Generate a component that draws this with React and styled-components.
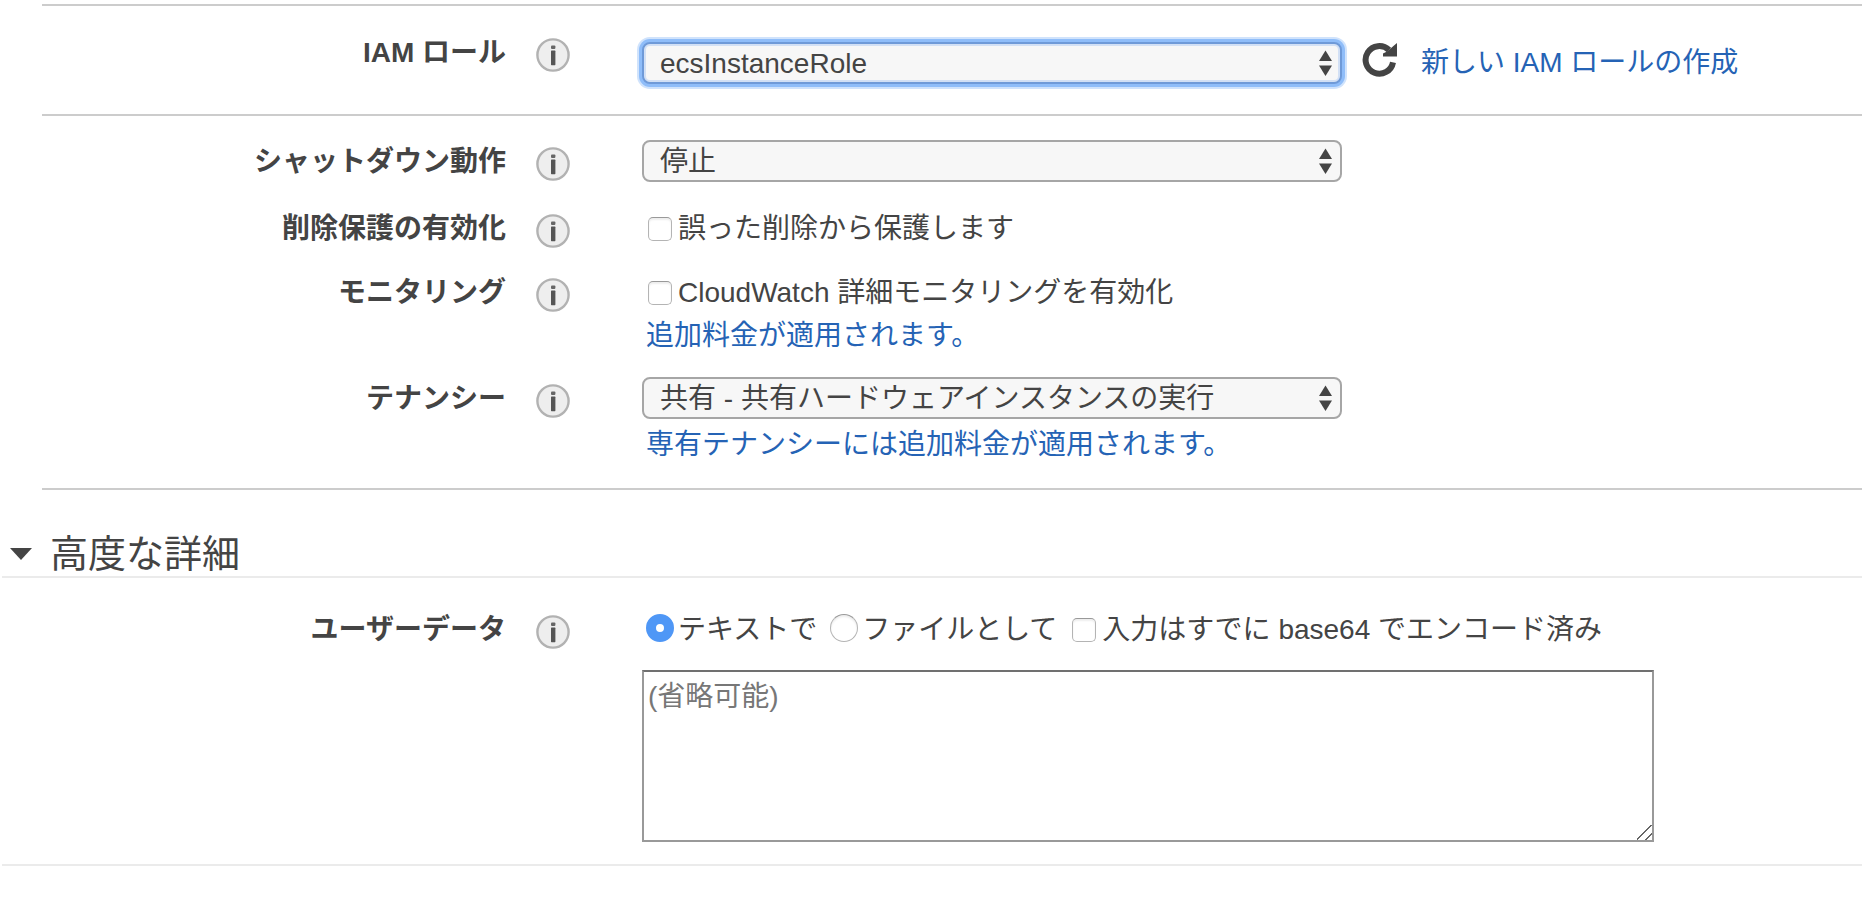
import React, { useState } from 'react'
import styled, { createGlobalStyle } from 'styled-components'

const GlobalStyle = createGlobalStyle`
  * {
    box-sizing: border-box;
  }

  body {
    margin: 0;
    background: #fff;
    color: #444;
    font-family: 'Liberation Sans', 'Noto Sans CJK JP', sans-serif;
    font-size: 28px;
    line-height: 44px;
  }

  input, select, textarea, button {
    margin: 0;
    font: inherit;
    color: inherit;
  }
`

const Page = styled.main`
  padding-top: 4px;
  overflow-x: hidden;
`

const Rule = styled.hr`
  height: 2px;
  margin: 0 0 0 ${props => (props.$faint ? '2px' : '42px')};
  border: 0;
  background: ${props => (props.$faint ? '#ebebeb' : '#ccc')};
`

const Section = styled.section`
  display: flex;
  flex-direction: column;
  gap: 20px;
  padding: ${props => props.$top}px 0 ${props => props.$bottom}px;
`

const Row = styled.div`
  display: flex;
  align-items: flex-start;
`

const RowLabel = styled.label`
  flex: 0 0 506px;
  font-weight: bold;
  text-align: right;
`

const InfoButton = styled.button`
  flex: none;
  width: 34px;
  height: 34px;
  margin: 7px 72px 0 30px;
  padding: 0;
  border: 0;
  background: none;
  cursor: pointer;

  svg {
    display: block;
  }
`

const Field = styled.div`
  flex: 1;
  min-width: 0;
`

const Controls = styled.div`
  display: flex;
  align-items: flex-start;
  padding-top: 11px;
`

const SelectBox = styled.div`
  position: relative;
  width: 700px;
  max-width: 100%;
  margin-bottom: 5px;

  svg {
    position: absolute;
    top: 8px;
    right: 10px;
    pointer-events: none;
  }
`

const StyledSelect = styled.select`
  display: block;
  width: 100%;
  height: 42px;
  padding: 2px 40px 0 16px;
  appearance: none;
  outline: none;
  border: 2px solid ${props => (props.$active ? '#6f9ad8' : '#a6a6a6')};
  border-radius: 8px;
  background: #f7f7f7;
  line-height: 36px;
  box-shadow: ${props =>
    props.$active
      ? 'inset 0 0 0 2px #d2e0f5, 0 0 0 3px #8fbdf9, 0 0 0 5px #d0e3fc'
      : 'none'};
`

const RefreshButton = styled.button`
  flex: none;
  width: 36px;
  height: 36px;
  margin: 0 24px 0 19px;
  padding: 0;
  border: 0;
  background: none;
  cursor: pointer;

  svg {
    display: block;
  }
`

const Link = styled.a`
  color: #2563b5;
  line-height: 42px;
  text-decoration: none;
`

const Note = styled.div`
  padding-left: 4px;
  line-height: 42px;
`

const Options = styled.div`
  display: flex;
  flex-wrap: wrap;
  gap: 13px;
  padding-left: 4px;
`

const Option = styled.label`
  display: flex;
  align-items: center;
`

const Checkbox = styled.input`
  width: 24px;
  height: 24px;
  margin: 0 6px 0 2px;
  appearance: none;
  border: 1px solid #b4b4b4;
  border-top-color: #999;
  border-radius: 5px;
  background: #fff;
  box-shadow: inset 0 2px 2px #eee;

  &:checked {
    border: 8px solid #4f97f6;
  }
`

const Radio = styled.input`
  width: 28px;
  height: 28px;
  margin: 0 4px 4px 0;
  appearance: none;
  border: 1px solid #b4b4b4;
  border-top-color: #999;
  border-radius: 50%;
  background: #fff;
  box-shadow: inset 0 2px 2px #eee;

  &:checked {
    border: 10px solid #4f97f6;
    box-shadow: none;
  }
`

const UserData = styled.textarea`
  display: block;
  width: 1012px;
  max-width: 100%;
  height: 172px;
  margin-top: 18px;
  padding: 4px;
  border: 2px solid #999;
  border-top-color: #707070;
  outline: none;
  background: #fff;
  line-height: 42px;

  &::placeholder {
    color: #777;
    opacity: 1;
  }

  &::-webkit-resizer {
    background: linear-gradient(
      135deg,
      transparent 44%,
      #666 46%,
      #666 50%,
      transparent 52%,
      transparent 74%,
      #666 76%,
      #666 80%,
      transparent 82%
    );
  }
`

const Heading = styled.h2`
  display: flex;
  margin: 42px 0 0;
  font-size: 38px;
  font-weight: normal;
  line-height: 44px;
`

const Toggle = styled.button`
  display: flex;
  align-items: center;
  gap: 18px;
  padding: 0 0 0 10px;
  border: 0;
  background: none;
  cursor: pointer;
`

const Info = ({ about }) => (
  <InfoButton type="button" aria-label={about}>
    <svg width="34" height="34" viewBox="0 0 34 34">
      <circle cx="17" cy="17" r="15.6" fill="#eee" stroke="#b2b2b2" strokeWidth="2.4" />
      <rect x="15" y="7.5" width="4.4" height="3.6" rx="1" fill="#666" />
      <rect x="15" y="12.6" width="4.4" height="14.6" rx="0.6" fill="#555" />
    </svg>
  </InfoButton>
)

const Select = ({ id, active, options }) => (
  <SelectBox>
    <StyledSelect id={id} $active={active}>
      {options.map(option => (
        <option key={option}>{option}</option>
      ))}
    </StyledSelect>
    <svg width="13" height="27" viewBox="0 0 13 27" fill="#444">
      <path d="M6.5 0.5 L13 11 H0 Z" />
      <path d="M0 15.5 H13 L6.5 26 Z" />
    </svg>
  </SelectBox>
)

const FormRow = ({ id, label, children }) => (
  <Row>
    <RowLabel htmlFor={id}>{label}</RowLabel>
    <Info about={label} />
    <Field>{children}</Field>
  </Row>
)

const App = () => {
  const [open, setOpen] = useState(true)

  return (
    <Page>
      <GlobalStyle />
      <Rule />
      <Section $top={25} $bottom={25}>
        <FormRow id="iam-role" label="IAM ロール">
          <Controls>
            <Select id="iam-role" active options={['ecsInstanceRole']} />
            <RefreshButton type="button" aria-label="更新">
              <svg width="36" height="36" viewBox="0 0 36 36">
                <path
                  d="M32 20.4 A13.8 13.8 0 1 1 28 8"
                  fill="none"
                  stroke="#444"
                  strokeWidth="6"
                />
                <path d="M36 1 V14.6 H22 V11.5 L26 9.5 L33 3.5 Z" fill="#444" />
              </svg>
            </RefreshButton>
            <Link href="#iam">新しい IAM ロールの作成</Link>
          </Controls>
        </FormRow>
      </Section>

      <Rule />
      <Section $top={24} $bottom={22}>
        <FormRow id="shutdown" label="シャットダウン動作">
          <Select id="shutdown" options={['停止', '終了']} />
        </FormRow>
        <FormRow id="protection" label="削除保護の有効化">
          <Options>
            <Option>
              <Checkbox id="protection" type="checkbox" />
              誤った削除から保護します
            </Option>
          </Options>
        </FormRow>
        <FormRow id="monitoring" label="モニタリング">
          <Options>
            <Option>
              <Checkbox id="monitoring" type="checkbox" />
              CloudWatch 詳細モニタリングを有効化
            </Option>
          </Options>
          <Note>
            <Link href="#monitoring-price">追加料金が適用されます。</Link>
          </Note>
        </FormRow>
        <FormRow id="tenancy" label="テナンシー">
          <Select
            id="tenancy"
            options={['共有 - 共有ハードウェアインスタンスの実行']}
          />
          <Note>
            <Link href="#tenancy-price">
              専有テナンシーには追加料金が適用されます。
            </Link>
          </Note>
        </FormRow>
      </Section>
      <Rule />

      <Heading>
        <Toggle type="button" aria-expanded={open} onClick={() => setOpen(!open)}>
          <svg width="22" height="12" viewBox="0 0 22 12">
            <path d="M0 0 H22 L11 12 Z" fill="#444" />
          </svg>
          高度な詳細
        </Toggle>
      </Heading>
      <Rule $faint />
      {open && (
        <Section $top={30} $bottom={22}>
          <FormRow id="user-data" label="ユーザーデータ">
            <Options>
              <Option>
                <Radio type="radio" name="format" defaultChecked />
                テキストで
              </Option>
              <Option>
                <Radio type="radio" name="format" />
                ファイルとして
              </Option>
              <Option>
                <Checkbox type="checkbox" />
                入力はすでに base64 でエンコード済み
              </Option>
            </Options>
            <UserData id="user-data" placeholder="(省略可能)" />
          </FormRow>
        </Section>
      )}
      <Rule $faint />
    </Page>
  )
}

export default App
